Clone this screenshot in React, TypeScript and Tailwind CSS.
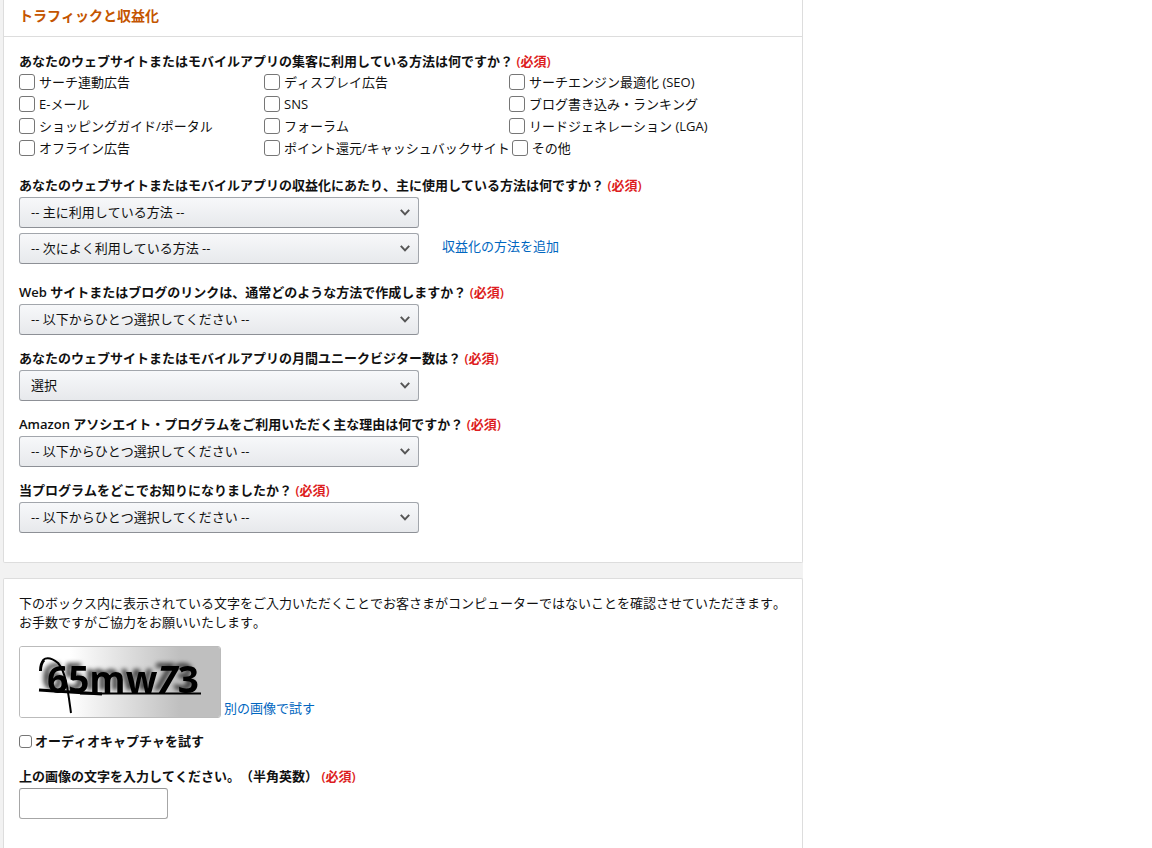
import type { ReactNode } from "react";

const TRAFFIC_ROWS = [
  ["サーチ連動広告", "ディスプレイ広告", "サーチエンジン最適化 (SEO)"],
  ["E-メール", "SNS", "ブログ書き込み・ランキング"],
  ["ショッピングガイド/ポータル", "フォーラム", "リードジェネレーション (LGA)"],
  ["オフライン広告", "ポイント還元/キャッシュバックサイト", "その他"],
];

const CHOOSE_ONE = "-- 以下からひとつ選択してください --";

function Required() {
  return <span className="text-[#dd1d21]">(必須)</span>;
}

function Label(props: { htmlFor: string; children: ReactNode }) {
  return (
    <label htmlFor={props.htmlFor} className="mb-0.5 block font-semibold">
      {props.children} <Required />
    </label>
  );
}

function Select(props: { id: string; text: string; label?: string }) {
  return (
    <div className="relative w-full max-w-[400px]">
      <select
        id={props.id}
        aria-label={props.label}
        className="block h-[31px] w-full appearance-none rounded-[3px] border border-[#a2a6ac] border-b-[#8d9096] bg-linear-to-b from-[#f7f8fa] to-[#e7e9ec] pr-8 pl-[11px] text-[#111]"
      >
        <option>{props.text}</option>
      </select>
      <svg
        viewBox="0 0 10 7"
        className="pointer-events-none absolute top-3 right-[9px] h-[7px] w-[10px]"
        fill="none"
        stroke="#555"
        strokeWidth="2"
      >
        <path d="M0.8 0.9 5 5.4 9.2 0.9" />
      </svg>
    </div>
  );
}

function Question(props: { id: string; title: string; text: string }) {
  return (
    <div>
      <Label htmlFor={props.id}>{props.title}</Label>
      <Select id={props.id} text={props.text} />
    </div>
  );
}

function Captcha() {
  return (
    <svg viewBox="0 0 200 70" className="h-[72px] w-[202px] rounded-[3px] border border-[#bbb]" role="img" aria-label="キャプチャ">
      <defs>
        <linearGradient id="captcha-bg">
          <stop offset="0.25" stopColor="#fff" />
          <stop offset="0.8" stopColor="#bfbfbf" />
        </linearGradient>
        <filter id="captcha-shadow" x="-10%" y="-30%" width="120%" height="160%">
          <feDropShadow dx="-5" dy="-3" stdDeviation="2" floodColor="#000" floodOpacity="0.7" />
        </filter>
      </defs>
      <rect width="200" height="70" fill="url(#captcha-bg)" />
      <text
        x="27"
        y="46"
        fontFamily="'Open Sans', sans-serif"
        fontWeight="700"
        fontSize="37"
        filter="url(#captcha-shadow)"
      >
        65mw<tspan fontStyle="italic">7</tspan>3
      </text>
      <g fill="none" stroke="#000" strokeLinejoin="round">
        <path d="M20.500 24C20.500 19 21 16 24 13" strokeWidth="3" />
        <path d="M23 13C28 9 33 12 38 16C46 25 48 44 51 66" strokeWidth="2" />
        <path d="M19 43 82 47" strokeWidth="3" />
        <path d="M60 46.500H181" strokeWidth="2" />
      </g>
    </svg>
  );
}

export default function App() {
  return (
    <div className="min-h-screen bg-white font-['Open_Sans','Noto_Sans_CJK_JP',sans-serif] text-[13px] leading-[19px] text-[#111] [font-kerning:none] [text-spacing-trim:space-all]">
      <main className="min-h-screen max-w-[803px] bg-[#f2f2f2] pl-[3px]">
        <section className="rounded-b-[2px] border border-t-0 border-[#ddd] bg-white">
          <h2 className="border-b border-[#ddd] px-[15px] pt-1 pb-2 text-sm leading-6 font-semibold text-[#c45500]">
            トラフィックと収益化
          </h2>
          <div className="flex flex-col gap-[14px] px-[15px] pt-[15px] pb-[29px]">
            <fieldset className="pb-[3px]">
              <legend className="font-semibold">
                あなたのウェブサイトまたはモバイルアプリの集客に利用している方法は何ですか？ <Required />
              </legend>
              {TRAFFIC_ROWS.map((row, i) => (
                <div key={i} className="flex">
                  {row.map((name) => (
                    <label key={name} className="flex h-[22px] min-w-[245px] items-center gap-1 pr-0.5 whitespace-nowrap">
                      <input type="checkbox" className="size-4 appearance-none rounded-[3px] border border-[#767676] bg-white" />
                      {name}
                    </label>
                  ))}
                </div>
              ))}
            </fieldset>
            <div className="pb-[5px]">
              <Label htmlFor="monetize">
                あなたのウェブサイトまたはモバイルアプリの収益化にあたり、主に使用している方法は何ですか？
              </Label>
              <Select id="monetize" text="-- 主に利用している方法 --" />
              <div className="mt-[5px] flex items-center gap-[23px]">
                <Select id="monetize-second" label="次によく利用している方法" text="-- 次によく利用している方法 --" />
                <a href="#add" className="pb-1 whitespace-nowrap text-[#0066c0]">収益化の方法を追加</a>
              </div>
            </div>
            <Question id="links" title="Web サイトまたはブログのリンクは、通常どのような方法で作成しますか？" text={CHOOSE_ONE} />
            <Question id="visitors" title="あなたのウェブサイトまたはモバイルアプリの月間ユニークビジター数は？" text="選択" />
            <Question id="reason" title="Amazon アソシエイト・プログラムをご利用いただく主な理由は何ですか？" text={CHOOSE_ONE} />
            <Question id="source" title="当プログラムをどこでお知りになりましたか？" text={CHOOSE_ONE} />
          </div>
        </section>

        <section className="mt-[15px] rounded-t-[2px] border border-b-0 border-[#ddd] bg-white px-[15px] pt-[15px] pb-[29px]">
          <p>
            下のボックス内に表示されている文字をご入力いただくことでお客さまがコンピューターではないことを確認させていただきます。お手数ですがご協力をお願いいたします。
          </p>
          <div className="mt-[14px] flex items-end gap-[3px]">
            <Captcha />
            <a href="#retry" className="text-[#0066c0]">別の画像で試す</a>
          </div>
          <label className="mt-[14px] flex items-center gap-[3px] font-semibold">
            <input type="checkbox" className="size-[13px] appearance-none rounded-[3px] border border-[#767676] bg-white" />
            オーディオキャプチャを試す
          </label>
          <div className="mt-4">
            <Label htmlFor="captcha">上の画像の文字を入力してください。（半角英数）</Label>
            <input id="captcha" type="text" className="block h-[31px] w-[149px] rounded-[3px] border border-[#a6a6a6] border-t-[#949494] px-2" />
          </div>
        </section>
      </main>
    </div>
  );
}
